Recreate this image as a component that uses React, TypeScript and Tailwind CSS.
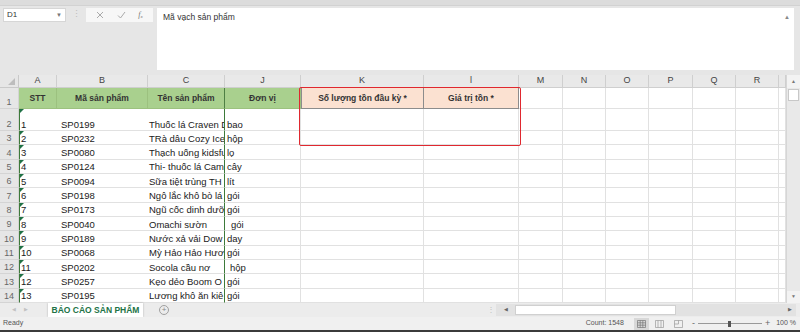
import React from 'react';

const FONT = { fontFamily: '"Liberation Sans", Arial, sans-serif' };

const COLS = [
  { id: 'A', w: 'w-[38px]' },
  { id: 'B', w: 'w-[91px]' },
  { id: 'C', w: 'w-[77px]' },
  { id: 'J', w: 'w-[76px]' },
  { id: 'K', w: 'w-[123px]' },
  { id: 'L', w: 'w-[95px]' },
  { id: 'M', w: 'w-[44px]' },
  { id: 'N', w: 'w-[43px]' },
  { id: 'O', w: 'w-[43px]' },
  { id: 'P', w: 'w-[44px]' },
  { id: 'Q', w: 'w-[43px]' },
  { id: 'R', w: 'w-[43px]' },
  { id: '', w: 'w-[7px]' },
];

const EMPTY_COLS = COLS.slice(4);

// product names are cut where the unit column starts, as in the sheet
const ROWS = [
  { stt: '1', code: 'SP0199', name: 'Thuốc lá Craven D', unit: 'bao', pad: 'pl-[2px]' },
  { stt: '2', code: 'SP0232', name: 'TRà dâu Cozy Ice', unit: 'hộp', pad: 'pl-[2px]' },
  { stt: '3', code: 'SP0080', name: 'Thạch uống kidsfu', unit: 'lọ', pad: 'pl-[2px]' },
  { stt: '4', code: 'SP0124', name: 'Thi- thuốc lá Came', unit: 'cây', pad: 'pl-[2px]' },
  { stt: '5', code: 'SP0094', name: 'Sữa tiệt trùng TH', unit: 'lít', pad: 'pl-[2px]' },
  { stt: '6', code: 'SP0198', name: 'Ngô lắc khô bò lá', unit: 'gói', pad: 'pl-[2px]' },
  { stt: '7', code: 'SP0173', name: 'Ngũ cốc dinh dưỡ', unit: 'gói', pad: 'pl-[2px]' },
  { stt: '8', code: 'SP0040', name: 'Omachi sườn', unit: 'gói', pad: 'pl-[6px]' },
  { stt: '9', code: 'SP0189', name: 'Nước xả vải Dow', unit: 'day', pad: 'pl-[2px]' },
  { stt: '10', code: 'SP0068', name: 'Mỳ Hảo Hảo Hươ', unit: 'gói', pad: 'pl-[2px]' },
  { stt: '11', code: 'SP0202', name: 'Socola cầu nơ', unit: 'hộp', pad: 'pl-[5px]' },
  { stt: '12', code: 'SP0257', name: 'Kẹo dẻo Boom O', unit: 'gói', pad: 'pl-[2px]' },
  { stt: '13', code: 'SP0195', name: 'Lương khô ăn kiê', unit: 'gói', pad: 'pl-[2px]' },
];

function RowHead({ n, h }: { n: string; h: string }) {
  return (
    <div className={`w-[19px] ${h} shrink-0 bg-[#e6e6e6] border-r border-b border-[#d4d4d4] flex items-end justify-center pb-[1px] text-[9px] leading-none text-[#666]`}>
      {n}
    </div>
  );
}

function FormulaBar() {
  return (
    <div className="h-[75px] bg-[#e6e6e6] flex flex-col">
      <div className="h-[6px] bg-[#dcdcdc] border-b border-[#d2d2d2]" />
      <div className="flex items-start pt-[2px] pl-[3px] pr-[6px]">
        <div className="w-[63px] h-[14px] bg-white border border-[#d6d6d6] flex items-center justify-between px-[3px] text-[8px] text-[#333]">
          <span>D1</span>
          <span className="text-[6px] text-[#777]">▼</span>
        </div>
        <div className="w-[20px] h-[14px] flex items-center justify-center text-[9px] text-[#bdbdbd]">⋮</div>
        <div className="w-[67px] h-[14px] bg-[#f7f7f7] flex items-center justify-around px-[4px]">
          <svg width="8" height="8" viewBox="0 0 8 8"><path d="M1 1L7 7M7 1L1 7" stroke="#aaa" strokeWidth="1" /></svg>
          <svg width="9" height="8" viewBox="0 0 9 8"><path d="M1 4.5L3.5 7L8 1" stroke="#aaa" strokeWidth="1" fill="none" /></svg>
          <span className="italic text-[8px] text-[#777]" style={{ fontFamily: '"Liberation Serif", serif' }}>f<sub className="text-[5px]">x</sub></span>
        </div>
        <div className="ml-[4px] flex-1 h-[62px] bg-white flex justify-between pl-[6px] pr-[4px] pt-[3px]">
          <span className="text-[8.5px] text-[#333]">Mã vạch sản phẩm</span>
          <span className="text-[6px] text-[#888] pt-[2px]">▲</span>
        </div>
      </div>
    </div>
  );
}

function ColumnHeaders() {
  return (
    <div className="flex h-[13px]">
      <div className="w-[19px] shrink-0 bg-[#e6e6e6] border-r border-b border-[#c9c9c9] flex items-end justify-end pr-[3px] pb-[2px]">
        <div className="w-0 h-0 border-l-[7px] border-l-transparent border-b-[7px] border-b-[#bdbdbd]" />
      </div>
      {COLS.map((c, i) => (
        <div
          key={i}
          className={`${c.w} shrink-0 bg-[#e9e9e9] border-r border-b border-[#cfcfcf] flex items-center justify-center text-[9px] text-[#444]`}
        >
          {c.id === 'L' ? 'l' : c.id}
        </div>
      ))}
    </div>
  );
}

function HeaderRow() {
  const green = 'bg-[#a9d08e] border-r border-b border-[#9cc17f] flex items-center justify-center text-[8.5px] font-bold text-[#333]';
  const salmon = 'bg-[#fbe1d1] border-r border-b border-[#8c8c8c] flex items-center justify-center text-[8.5px] font-bold text-[#333]';
  return (
    <div className="flex h-[21px]">
      <RowHead n="1" h="h-[21px]" />
      <div className={`w-[38px] shrink-0 ${green}`}>STT</div>
      <div className={`w-[91px] shrink-0 ${green}`}>Mã sản phẩm</div>
      <div className={`w-[77px] shrink-0 ${green} border-r-[#4e7f44]`}>Tên sản phẩm</div>
      <div className={`w-[76px] shrink-0 ${green}`}>Đơn vị</div>
      <div className={`w-[123px] shrink-0 ${salmon} border-l border-l-[#8c8c8c]`}>Số lượng tồn đầu kỳ *</div>
      <div className={`w-[95px] shrink-0 ${salmon}`}>Giá trị tồn *</div>
      {COLS.slice(6).map((c, i) => (
        <div key={i} className={`${c.w} shrink-0 border-r border-b border-[#e1e1e1]`} />
      ))}
    </div>
  );
}

type Row = (typeof ROWS)[number];

function DataRow({ r, idx }: { r: Row; idx: number }) {
  const h = idx === 0 ? 'h-[22px]' : 'h-[14.33px]';
  const cell = 'shrink-0 border-b border-[#e1e1e1] flex items-end pb-[1px] text-[9.5px] leading-none text-[#1a1a1a] whitespace-nowrap overflow-hidden';
  return (
    <div className={`flex ${h}`}>
      <RowHead n={String(idx + 2)} h={h} />
      <div className={`w-[38px] ${cell} relative border-l border-l-[#3d7a3a] pl-[1px]`}>
        <div className="absolute left-0 top-0 w-0 h-0 border-t-[4px] border-t-[#1e7145] border-r-[4px] border-r-transparent" />
        {r.stt}
      </div>
      <div className={`w-[91px] ${cell} pl-[4px]`}>{r.code}</div>
      <div className={`w-[77px] ${cell} border-r border-r-[#3d7a3a] pl-[1px]`}>{r.name}</div>
      <div className={`w-[76px] ${cell} border-r ${r.pad}`}>{r.unit}</div>
      {EMPTY_COLS.map((c, i) => (
        <div key={i} className={`${c.w} ${cell} border-r`} />
      ))}
    </div>
  );
}

function VScroll() {
  return (
    <div className="w-[14px] shrink-0 bg-[#e9e9e9] border-l border-[#d6d6d6] flex flex-col items-center">
      <div className="h-[13px] w-full flex items-center justify-center text-[5px] text-[#777] bg-[#f3f3f3]">▲</div>
      <div className="w-[11px] h-[12px] mt-[1px] bg-white border border-[#c8c8c8]" />
      <div className="flex-1" />
      <div className="h-[12px] w-full flex items-center justify-center text-[5px] text-[#777] bg-[#f3f3f3]">▼</div>
    </div>
  );
}

function SheetTabs() {
  return (
    <div className="h-[14px] bg-[#ececec] flex items-center">
      <div className="w-[48px] shrink-0 flex items-center gap-[8px] pl-[12px] text-[5px] text-[#c2c2c2]">
        <span>◀</span>
        <span>▶</span>
      </div>
      <div className="w-[95px] h-[14px] shrink-0 bg-white shadow-[0_0_2px_rgba(0,0,0,0.25)] flex items-center justify-center text-[8.5px] font-bold text-[#217346]">
        BÁO CÁO SẢN PHẨM
      </div>
      <div className="ml-[16px] w-[10px] h-[10px] rounded-full border border-[#a0a0a0] flex items-center justify-center text-[8px] leading-none text-[#888]">+</div>
      <div className="flex-1" />
      <div className="w-[10px] text-[8px] text-[#c0c0c0] text-center">⋮</div>
      <div className="w-[300px] h-[12px] mr-[4px] flex items-center bg-[#e2e2e2]">
        <div className="w-[19px] text-[5px] text-[#666] text-center">◀</div>
        <div className="w-[161px] h-[10px] bg-white border border-[#d0d0d0]" />
        <div className="flex-1" />
        <div className="w-[12px] text-[5px] text-[#666] text-center">▶</div>
      </div>
    </div>
  );
}

function StatusBar() {
  return (
    <div className="h-[15px] bg-[#f0f0f0] border-b-2 border-[#3b3b3b] flex items-center text-[7px] text-[#555]">
      <span className="pl-[3px]">Ready</span>
      <div className="flex-1" />
      <span>Count: 1548</span>
      <div className="ml-[10px] w-[15px] h-[12px] bg-[#d8d8d8] flex items-center justify-center">
        <svg width="9" height="8" viewBox="0 0 9 8"><path d="M0.5 0.5H8.5V7.5H0.5ZM3.2 0.5V7.5M5.8 0.5V7.5M0.5 2.8H8.5M0.5 5.2H8.5" stroke="#777" strokeWidth="0.7" fill="none" /></svg>
      </div>
      <div className="ml-[5px] w-[12px] flex items-center justify-center">
        <svg width="9" height="8" viewBox="0 0 9 8"><path d="M0.5 0.5H8.5V7.5H0.5ZM3 0.5V7.5M6 0.5V7.5" stroke="#999" strokeWidth="0.7" fill="none" /></svg>
      </div>
      <div className="ml-[7px] w-[12px] flex items-center justify-center">
        <svg width="9" height="8" viewBox="0 0 9 8"><path d="M0.5 0.5H8.5V7.5H0.5ZM0.5 4H4.5V0.5" stroke="#999" strokeWidth="0.7" fill="none" /></svg>
      </div>
      <span className="ml-[7px] text-[9px] text-[#666]">-</span>
      <div className="w-[64px] h-[8px] mx-[3px] relative flex items-center">
        <div className="w-full h-px bg-[#999]" />
        <div className="absolute left-[30px] top-[1px] w-[3px] h-[6px] bg-[#555]" />
      </div>
      <span className="text-[9px] text-[#666]">+</span>
      <span className="ml-[6px] pr-[4px]">100 %</span>
    </div>
  );
}

export default function App() {
  return (
    <div className="relative w-[800px] h-[332px] overflow-hidden bg-white flex flex-col" style={FONT}>
      <FormulaBar />
      <div className="flex h-[228px]">
        <div className="w-[786px] shrink-0 flex flex-col">
          <ColumnHeaders />
          <HeaderRow />
          {ROWS.map((r, i) => (
            <DataRow key={i} r={r} idx={i} />
          ))}
        </div>
        <VScroll />
      </div>
      <SheetTabs />
      <StatusBar />

      {/* red highlight box drawn over the sheet */}
      <div className="absolute left-[299px] top-[87px] w-[222px] h-[59px] border-[1.5px] border-[#e0282f] rounded-[2px] pointer-events-none" />
    </div>
  );
}
